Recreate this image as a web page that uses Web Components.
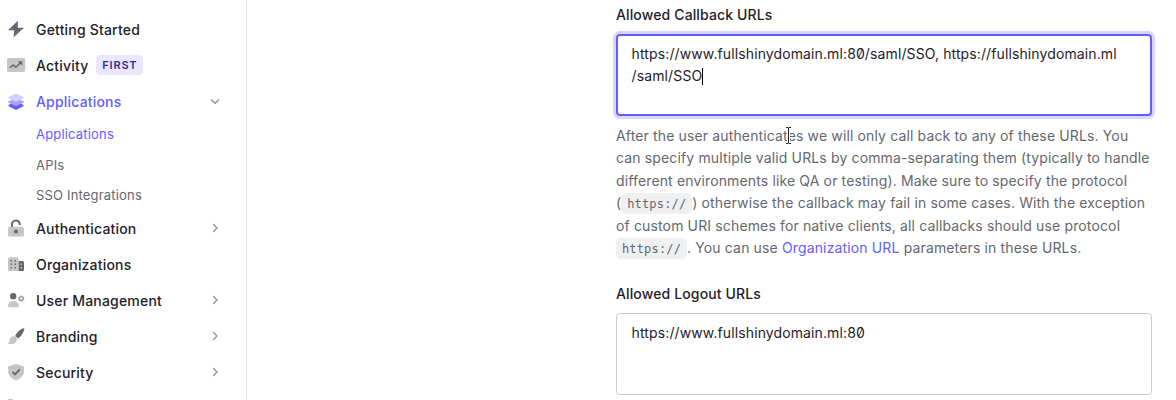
<!DOCTYPE html>
<html lang="en">
<head>
<meta charset="utf-8">
<title>Application settings</title>
<style>
html,body{margin:0;height:100%;overflow:hidden;background:#fff}
body{font-family:Inter,"Liberation Sans",sans-serif;font-size:14px;color:#1e212a}
</style>
</head>
<body>
<settings-page></settings-page>
<script>
const define = (name, html) => {
  const t = document.createElement('template');
  t.innerHTML = html;
  customElements.define(name, class extends HTMLElement {
    constructor() {
      super();
      this.attachShadow({ mode: 'open' }).append(t.content.cloneNode(true));
    }
  });
};

const icons = {
  bolt: '<path d="M9.8-.3 0 9.300h6.200L5.600 16.200 16 6.700H9.800Z" fill="#65676e"/>',
  activity: '<rect x="-1" y="1" width="18.2" height="14" rx="1.8" fill="#c5c6c8"/><path d="m2 10.7 3.1-2.8 2.7 2.3 5.3-4.9" fill="none" stroke="#65676e" stroke-width="1.5"/><path d="M9.8 4.2h4.5v4.6Z" fill="#65676e"/>',
  layers: '<path d="m8 8.2 7.6 3.9-.2 1.2L8 17 .6 13.300l-.2-1.200Z" fill="#635dff"/><path d="m8 5 7.8 3.600v1L8 13.200.2 9.600v-1Z" fill="#a5a1ff"/><path d="m8 .4 7.700 3.700v1L8 8.900.3 5.100v-1Z" fill="#d0ceff"/>',
  lock: '<path d="M4 7V4.400a3.900 3.900 0 0 1 7.800-.2V5" fill="none" stroke="#65676e" stroke-width="2"/><rect x="0" y="6.800" width="16" height="9.700" rx="1.600" fill="#c5c6c8"/><circle cx="8" cy="11.600" r="2" fill="#65676e"/>',
  building: '<path d="M1.500 1.200h7.700q1.500 0 1.500 1.500v12.300H1.500Q0 15 0 13.500V2.700q0-1.500 1.500-1.500Z" fill="#c5c6c8"/><path d="M10.700 5h3.800Q16 5 16 6.500v7q0 1.500-1.500 1.500h-3.800Z" fill="#65676e"/><path d="M2.500 4h1.500v1.500H2.500Zm4 0H8v1.500H6.500Zm-4 3.500H4V9H2.500Zm4 0H8V9H6.500Zm-4 3.500H4v1.500H2.500Zm4 0H8v1.500H6.500Z" fill="#65676e"/><path d="M12.700 7.500h1.300v1.500h-1.300Zm0 3.500h1.300v1.500h-1.300Z" fill="#d6d7d9"/>',
  users: '<circle cx="5.200" cy="4.200" r="3.200" fill="#65676e"/><path d="M0 14.500Q0 9 5.300 9t5.400 5.500q0 .8-.8.800H.8q-.8 0-.8-.8Z" fill="#c5c6c8"/><circle cx="13.200" cy="6.500" r="1.900" fill="none" stroke="#929499" stroke-width="1.300"/><circle cx="13.200" cy="6.500" r="2.700" fill="none" stroke="#929499" stroke-width=".8" stroke-dasharray="1.400 1.420"/>',
  brush: '<path d="M15.200.2q1.200-.3 1.200.8-1.300 5.300-6 9.600L7 8q3-5.700 8.200-7.800Z" fill="#65676e"/><path d="M5.700 8.300q2.600.1 3.300 2.800-.3 4-4.200 5H.3q-.8 0-.2-.7 1.200-.8 1.400-3.100.7-3.700 4.200-4Z" fill="#c5c6c8"/>',
  shield: '<path d="m8 0 7.300 2.200q.6.200.6.800v5.300Q15 14 8 16.400 1 14 .1 8.300V3q0-.6.600-.8Z" fill="#c5c6c8"/><path d="m4.500 7.900 2.400 2.400 5-5" fill="none" stroke="#65676e" stroke-width="1.900"/>',
  more: '<rect x="0" y="0" width="5" height="14" rx="1" fill="#c5c6c8"/>'
};

customElements.define('nav-icon', class extends HTMLElement {
  constructor() { super(); this.attachShadow({ mode: 'open' }); }
  connectedCallback() {
    this.shadowRoot.innerHTML = `<style>:host{display:block;width:16px;height:16px;flex:none}svg{display:block;overflow:visible}</style>
      <svg width="16" height="16" viewBox="0 0 16 16">${icons[this.getAttribute('name')]}</svg>`;
  }
});

customElements.define('nav-item', class extends HTMLElement {
  constructor() { super(); this.attachShadow({ mode: 'open' }); }
  connectedCallback() {
    const arrow = this.getAttribute('arrow');
    const d = arrow === 'down' ? 'M1 3.500 5 7.300 9 3.500' : 'M3.200 1 7 5 3.200 9';
    this.shadowRoot.innerHTML = `<style>
      :host{display:flex;align-items:center;height:36px;padding:0 26px 0 8px;font-weight:500;letter-spacing:.19px}
      :host([active]){color:#635dff}
      .label{margin-left:12px;flex:1;display:flex;align-items:center;white-space:nowrap}
      .arrow{display:block;flex:none}
      </style>
      <nav-icon name="${this.getAttribute('icon')}"></nav-icon><span class="label"><slot></slot></span>
      ${arrow ? `<svg class="arrow" width="10" height="10" viewBox="0 0 10 10"><path d="${d}" fill="none" stroke="#8b8d93" stroke-width="1.200"/></svg>` : ''}`;
  }
});

define('nav-badge', `<style>
  :host{display:flex;align-items:center;justify-content:center;box-sizing:border-box;width:47px;height:20px;margin-left:7.500px;border-radius:4px;background:#e9e7ff;color:#3a2f87;font-size:11px;font-weight:600;letter-spacing:.8px;padding-left:1px}
  </style><slot></slot>`);

define('nav-subitem', `<style>
  :host{display:flex;align-items:center;height:30.500px;padding-left:36px;font-size:13px;letter-spacing:.18px;color:#65676e}
  :host([active]){color:#635dff}
  </style><slot></slot>`);

define('side-nav', `<style>
  :host{display:block;box-sizing:border-box;width:247px;height:400px;overflow:hidden;border-right:1px solid #e3e4e6;padding-top:11px}
  .sub{height:91px;display:flex;flex-direction:column;box-sizing:border-box;padding-top:.4px}
  </style>
  <nav-item icon="bolt">Getting Started</nav-item>
  <nav-item icon="activity">Activity<nav-badge>FIRST</nav-badge></nav-item>
  <nav-item icon="layers" arrow="down" active>Applications</nav-item>
  <div class="sub">
    <nav-subitem active>Applications</nav-subitem>
    <nav-subitem>APIs</nav-subitem>
    <nav-subitem>SSO Integrations</nav-subitem>
  </div>
  <nav-item icon="lock" arrow="right">Authentication</nav-item>
  <nav-item icon="building">Organizations</nav-item>
  <nav-item icon="users" arrow="right">User Management</nav-item>
  <nav-item icon="brush" arrow="right">Branding</nav-item>
  <nav-item icon="shield" arrow="right">Security</nav-item>
  <nav-icon name="more" style="margin:8.500px 0 0 8px"></nav-icon>`);

define('url-field', `<style>
  :host{display:block}
  .label{font-weight:500;line-height:20px;letter-spacing:.13px}
  .box{box-sizing:border-box;width:536px;height:82px;margin-top:9px;border:1px solid #c9cace;border-radius:4px;padding:8px 14.600px;line-height:22px;letter-spacing:.115px;font-feature-settings:"zero";white-space:nowrap}
  :host([focused]) .box{border:2px solid #635dff;padding:7px 13.600px;box-shadow:0 0 0 3px #d8d6ff}
  </style>
  <div class="label"><slot name="label"></slot></div>
  <div class="box"><slot></slot></div>`);

define('text-caret', `<style>:host{display:inline-block;width:1px;height:17px;background:#000;vertical-align:-4px}</style>`);

define('code-chip', `<style>
  :host{display:inline-flex;align-items:center;justify-content:center;box-sizing:border-box;width:71px;height:21px;border-radius:5px;background:#eff0f2;font-family:"DejaVu Sans Mono",monospace;font-size:12px;letter-spacing:.18px;vertical-align:middle;line-height:20px;margin:-2px 0 0;position:relative;top:.6px}
  </style><slot></slot>`);

define('field-hint', `<style>
  :host{display:block;color:#65676e;line-height:22.400px;letter-spacing:.14px}
  .line{height:22.400px;white-space:nowrap}
  a{color:#635dff}
  .l1{position:relative}
  .beam{position:absolute;left:168px;top:1px}
  </style>
  <div class="line l1">After the user authenticates we will only call back to any of these URLs. You
    <svg class="beam" width="9" height="19" viewBox="0 0 9 19"><path d="M2 1.500h2l.5.5.5-.5h2M4.500 2v15M2 17.500h2l.5-.5.5.5h2" fill="none" stroke="#fff" stroke-width="3"/><path d="M2 1.500h2l.5.5.5-.5h2M4.500 2v15M2 17.500h2l.5-.5.5.5h2" fill="none" stroke="#222" stroke-width="1"/></svg></div>
  <div class="line">can specify multiple valid URLs by comma-separating them (typically to handle</div>
  <div class="line">different environments like QA or testing). Make sure to specify the protocol</div>
  <div class="line">(<code-chip>https://</code-chip>) otherwise the callback may fail in some cases. With the exception</div>
  <div class="line">of custom URI schemes for native clients, all callbacks should use protocol</div>
  <div class="line"><code-chip>https://</code-chip>. You can use <a>Organization URL</a> parameters in these URLs.</div>`);

define('settings-page', `<style>
  :host{display:flex;height:400px;overflow:hidden}
  side-nav{flex:none}
  main{margin-left:369px;padding-top:5px;width:536px}
  field-hint{margin-top:9px}
  .second{margin-top:24.600px}
  </style>
  <side-nav></side-nav>
  <main>
    <url-field focused><span slot="label">Allowed Callback URLs</span>https://www.fullshinydomain.ml:80/saml/SSO, https://fullshinydomain.ml<br>/saml/SSO<text-caret></text-caret></url-field>
    <field-hint></field-hint>
    <url-field class="second"><span slot="label">Allowed Logout URLs</span>https://www.fullshinydomain.ml:80</url-field>
  </main>`);
</script>
</body>
</html>
